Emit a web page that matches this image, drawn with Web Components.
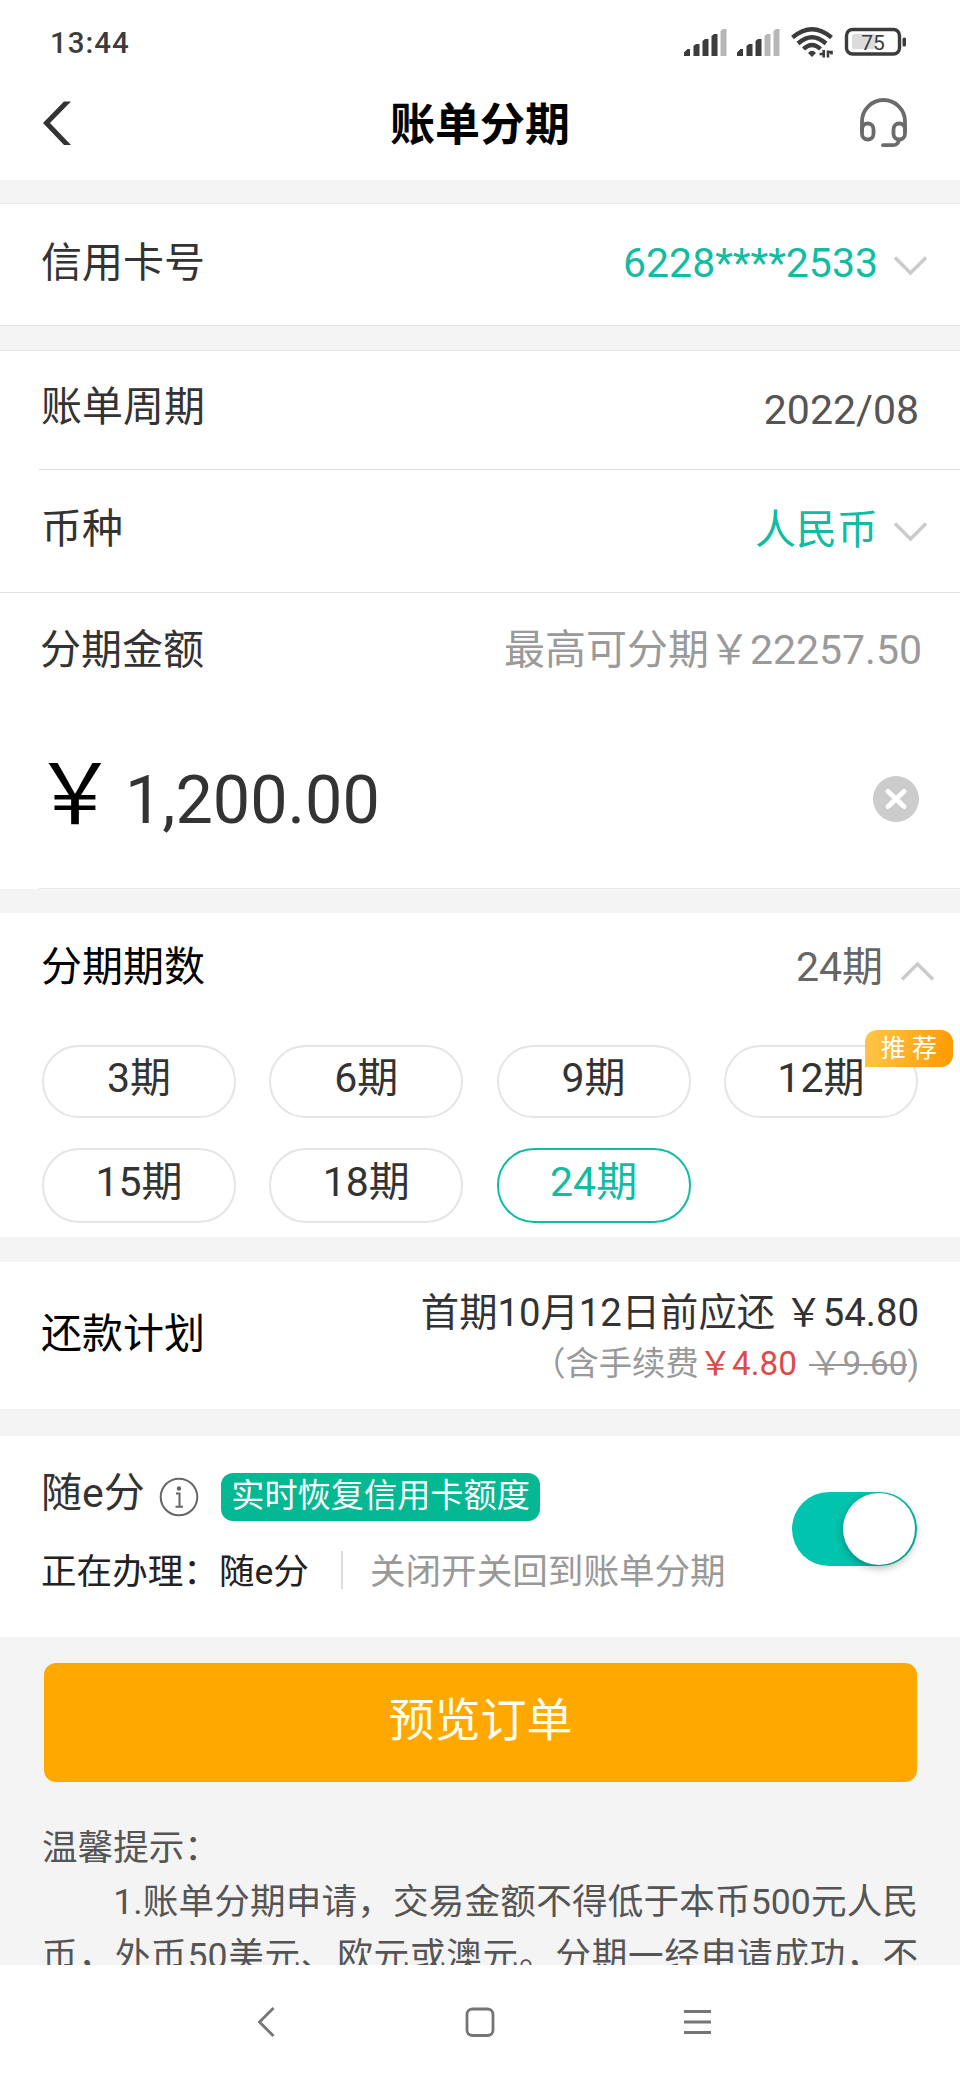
<!DOCTYPE html>
<html lang="zh-CN">
<head>
<meta charset="utf-8">
<title>账单分期</title>
<style>
html,body{margin:0;padding:0}
body{width:960px;height:2080px;overflow:hidden;background:#f4f4f4;font-family:Roboto,"Noto Sans CJK SC",sans-serif;font-size:41px;color:#333}
</style>
</head>
<body>
<bill-page></bill-page>
<script>
function define(name, html) {
  const t = document.createElement('template');
  t.innerHTML = html;
  customElements.define(name, class extends HTMLElement {
    constructor() {
      super();
      this.attachShadow({mode: 'open'}).appendChild(t.content.cloneNode(true));
    }
  });
}

define('status-bar', `
<style>
:host{display:flex;height:64px;justify-content:space-between;align-items:flex-start;color:#3c3c3c}
.time{margin:25px 0 0 50px;font-size:29.5px;line-height:36px;font-weight:500;letter-spacing:1px}
.icons{display:flex;margin:22px 51px 0 0}
svg{display:block}
</style>
<div class="time">13:44</div>
<div class="icons">
<svg width="227" height="40" viewBox="680 22 227 40">
<g fill="#3c3c3c">
<path d="M682 56v-3.500l3.500-3.500h2.500v7zM691.500 56v-10l2.500-2h3.500v12zM700.500 56v-15l2.500-2h3.500v17zM709.500 56v-20l2.500-2h3.500v22z"/>
<path d="M735 56v-3.500l3.500-3.500h2.500v7zM744.500 56v-10l2.500-2h3.500v12zM753.500 56v-15l2.500-2h3.500v17z"/>
</g>
<path fill="#b7b7b7" d="M718.500 56v-25l2.500-2h3.500v27zM762.500 56v-20l2.500-2h3.500v22zM771.500 56v-25l2.500-2h3.500v27z"/>
<g fill="none" stroke="#3c3c3c" stroke-width="4.400">
<path d="M790.500 37.500q19.500-16.500 39 0M796 43.500q14-12.500 28 0M801.500 49q8.500-8 17 0"/>
</g>
<path fill="#3c3c3c" d="M806 53q4-4.500 8 0l-4 4z"/>
<path stroke="#3c3c3c" stroke-width="2.600" fill="none" d="M817.500 54h4.200v-4M821.700 50v7.500M826 57.500v-7M826 52h3.500v2.500"/>
<rect x="850" y="34" width="24" height="15" rx="2" fill="#dcdcdc"/>
<rect x="844.500" y="29.500" width="53" height="24.500" rx="6" fill="none" stroke="#3c3c3c" stroke-width="3.400"/>
<rect x="900.500" y="37.500" width="3.500" height="9" rx="1.500" fill="#3c3c3c"/>
<text x="871" y="49.500" text-anchor="middle" font-size="21" font-weight="400" fill="#3c3c3c">75</text>
</svg>
</div>`);

define('nav-header', `
<style>
:host{display:grid;grid-template-columns:200px 1fr 200px;height:116px;align-items:center}
svg{display:block}
.l{margin-left:40px}.r{justify-self:end;margin-right:49px}
.t{text-align:center;font-size:45px;line-height:60px;font-weight:700;color:#000;margin-top:8px}
</style>
<svg class="l" width="40" height="116" viewBox="40 64 40 116"><path d="M64 101.500h7L50 123l21 22h-7L43 123z" fill="#333"/></svg>
<div class="t"><slot></slot></div>
<svg class="r" width="56" height="116" viewBox="855 64 56 116" fill="none" stroke="#6b6b6b" stroke-width="3.800" stroke-linecap="round" stroke-linejoin="round">
<path d="M862 131v-9.500a21.500 21.500 0 0 1 43 0v9.500"/>
<rect x="862" y="123.500" width="11.500" height="16" rx="5.700"/><rect x="893.500" y="123.500" width="11.500" height="16" rx="5.700"/>
<path d="M899 140q-1 5.200-6 5.200h-10"/></svg>`);

define('chevron-icon', `
<style>:host{display:block}svg{display:block}:host([up]) svg{transform:scaleY(-1)}</style>
<svg width="33" height="20" viewBox="0 0 33 20"><path d="M1 1.500L16.500 17L32 1.500" fill="none" stroke="#cbcbcb" stroke-width="3.500"/></svg>`);

define('form-row', `
<style>
:host{display:flex;justify-content:space-between;align-items:flex-start;box-sizing:border-box;padding:0 43px 0 41px;height:var(--h,123px);background:#fff;line-height:60px}
.l{margin-top:var(--lt,24px);margin-left:var(--ll,0)}
.r{display:flex;margin-top:var(--rt,24px);margin-right:var(--rr,0)}
</style>
<div class="l"><slot name="label"></slot></div>
<div class="r"><slot></slot></div>`);

define('amount-field', `
<style>
:host{display:flex;height:173px;background:#fff;align-items:flex-start;padding:0 41px 0 33px}
.y{font-size:84px;line-height:100px;color:#000;width:84px;margin-top:31px}
.v{font-size:66.500px;line-height:100px;margin:35px auto 0 8px}
svg{display:block;margin-top:61px}
</style>
<span class="y">￥</span><span class="v"><slot></slot></span>
<svg width="46" height="46" viewBox="0 0 46 46"><circle cx="23" cy="23" r="23" fill="#ccc"/><path d="M15 15.500l16 15m0-15l-16 15" stroke="#fff" stroke-width="5" stroke-linecap="round"/></svg>`);

define('term-pill', `
<style>
:host{display:block;position:relative;box-sizing:border-box;border:2px solid #e5e5e5;border-radius:37px;text-align:center;line-height:60px}
:host([selected]){border-color:#10bca2;color:#10bca2}
.t{margin-top:var(--pt,1px)}
.b{position:absolute;left:139px;top:-17px;width:88px;height:37px;border-radius:12px 12px 12px 0;background:linear-gradient(100deg,#ffc64a,#ff9a00);color:#fff;font-size:25px;line-height:37px}
.b{display:none}:host([hot]) .b{display:block}
</style>
<div class="t"><slot></slot></div><span class="b">推 荐</span>`);

define('term-grid', `
<style>:host{display:grid;grid-template-columns:repeat(4,194px);grid-template-rows:73px 75px;column-gap:33.300px;row-gap:30px;padding:0 42px;background:#fff;height:192px}
::slotted(:nth-child(n+5)){--pt:2px}</style><slot></slot>`);

define('plan-summary', `
<style>
:host{display:block;text-align:right}
.a{font-size:38.300px;line-height:56px;white-space:pre}
.b{font-size:33.300px;line-height:46px;color:#999;white-space:pre}
.b b{font-weight:400;color:#dd4a4a;margin-right:4px}
s{text-decoration:none;background:linear-gradient(#999,#999) 0 55%/100% 2px no-repeat}
</style>
<div class="a">首期10月12日前应还 ￥54.80</div>
<div class="b">（含手续费<b>￥4.80</b> <s>￥9.60</s>)</div>`);

define('toggle-switch', `
<style>
:host{display:flex;justify-content:flex-end;box-sizing:border-box;width:125px;height:74px;border-radius:37px;background:#00c4ad;padding:1px 2px}
i{display:block;width:72px;height:72px;border-radius:50%;background:#fff;box-shadow:0 3px 8px rgba(0,0,0,.3)}
</style><i></i>`);

define('suie-card', `
<style>
:host{display:flex;justify-content:space-between;box-sizing:border-box;height:201px;padding:0 43px 0 41px;background:#fff}
.one{display:flex;height:86px}
.name{line-height:60px;margin-top:27px}
.info{display:block;margin:41px 22px 0 14px}
.tag{height:48px;margin-top:37px;border-radius:12px;background:#03b893;color:#fff;font-size:33.200px;line-height:46px;padding:0 10.500px}
.two{display:flex;font-size:35.600px;line-height:50px;margin-top:25px;color:#222;white-space:nowrap}
.two i{width:2px;height:38px;margin:4px 27px 0 32px;background:#ddd}
.two em{font-style:normal;color:#999}
toggle-switch{margin-top:56px}
</style>
<div><div class="one"><span class="name">随e分</span>
<svg class="info" width="40" height="40" viewBox="0 0 40 40" fill="none" stroke="#666" stroke-width="2"><circle cx="20" cy="20" r="18.300"/><path d="M17 16.500h3.500v13M16.500 29.800h7.500"/><circle cx="20" cy="11.500" r="1.200" fill="#666"/></svg>
<span class="tag">实时恢复信用卡额度</span></div>
<div class="two"><span>正在办理：随e分</span><i></i><em>关闭开关回到账单分期</em></div></div>
<toggle-switch></toggle-switch>`);

define('primary-button', `
<style>:host{display:block;margin:26px 43px 0 44px;height:119px;border-radius:12px;background:#ffa800;color:#fffdf0;font-size:46px;line-height:115px;text-align:center}</style><slot></slot>`);

define('tips-text', `
<style>
:host{display:block;margin:0 42px;padding-top:39px;font-size:35.600px;line-height:54.200px;color:#555;height:144px;overflow:hidden}
div{white-space:nowrap;text-align:justify;text-align-last:justify}
.f{text-align-last:left}.i{padding-left:2em}
</style>
<div class="f">温馨提示：</div>
<div class="i">1.账单分期申请，交易金额不得低于本币500元人民</div>
<div>币，外币50美元、欧元或澳元。分期一经申请成功，不</div>`);

define('system-nav', `
<style>:host{display:block;height:115px;background:#fff}svg{display:block}</style>
<svg width="960" height="115" viewBox="0 1965 960 115" fill="none" stroke="#757575" stroke-width="2.800"><path d="M273.500 2008L259.500 2022L273.500 2036"/><rect x="467" y="2009" width="26" height="26.500" rx="5.500"/><path d="M684 2011.500h27M684 2022h27M684 2032.500h27"/></svg>`);

define('bill-page', `
<style>
:host{display:flex;flex-direction:column;width:960px;height:2080px;background:#f4f4f4}
.top{background:#fff;height:180px}
.g{color:#10bca2}
.card{margin-top:23px;border-top:1px solid #ebebeb;border-bottom:1px solid #e4e4e4;background:#fff}
.list{margin-top:24px;border-top:1px solid #e6e6e6;background:#fff}
.hr{height:1px;background:#e0e0e0}
</style>
<div class="top"><status-bar></status-bar><nav-header>账单分期</nav-header></div>
<div class="card"><form-row style="--h:121px;--lt:29px;--rt:29px;--rr:-10px"><span slot="label">信用卡号</span><span class="g">6228****2533</span><chevron-icon style="margin-top:23px;margin-left:16px"></chevron-icon></form-row></div>
<div class="list">
<form-row style="--h:118px;--lt:26px;--rt:29px;--rr:-2px"><span slot="label">账单周期</span><span style="color:#555">2022/08</span></form-row>
<div class="hr" style="margin-left:39px"></div>
<form-row style="--h:122px;--lt:29px;--rt:30px;--rr:-10px"><span slot="label">币种</span><span class="g">人民币</span><chevron-icon style="margin-top:22px;margin-left:16px"></chevron-icon></form-row>
<div class="hr"></div>
<form-row style="--h:122px;--lt:27px;--rt:27px;--ll:-1px;--rr:-5px"><span slot="label">分期金额</span><span style="color:#9a9a9a">最高可分期￥22257.50</span></form-row>
<amount-field>1,200.00</amount-field>
<div class="hr" style="margin-left:39px;background:#e8e8e8"></div>
</div>
<form-row style="margin-top:24px;--h:132px;--lt:24px;--rt:24px;--rr:-17px"><span slot="label" style="color:#000">分期期数</span><span style="color:#666">24期</span><chevron-icon up style="margin-top:24px;margin-left:18px"></chevron-icon></form-row>
<term-grid><term-pill>3期</term-pill><term-pill>6期</term-pill><term-pill>9期</term-pill><term-pill hot>12期</term-pill><term-pill>15期</term-pill><term-pill>18期</term-pill><term-pill selected>24期</term-pill></term-grid>
<form-row style="margin-top:25px;--h:147px;--lt:42px;--rt:23px;--rr:-2px"><span slot="label" style="color:#000">还款计划</span><plan-summary></plan-summary></form-row>
<suie-card style="margin-top:27px"></suie-card>
<primary-button>预览订单</primary-button>
<tips-text></tips-text>
<system-nav></system-nav>`);
</script>
</body>
</html>
